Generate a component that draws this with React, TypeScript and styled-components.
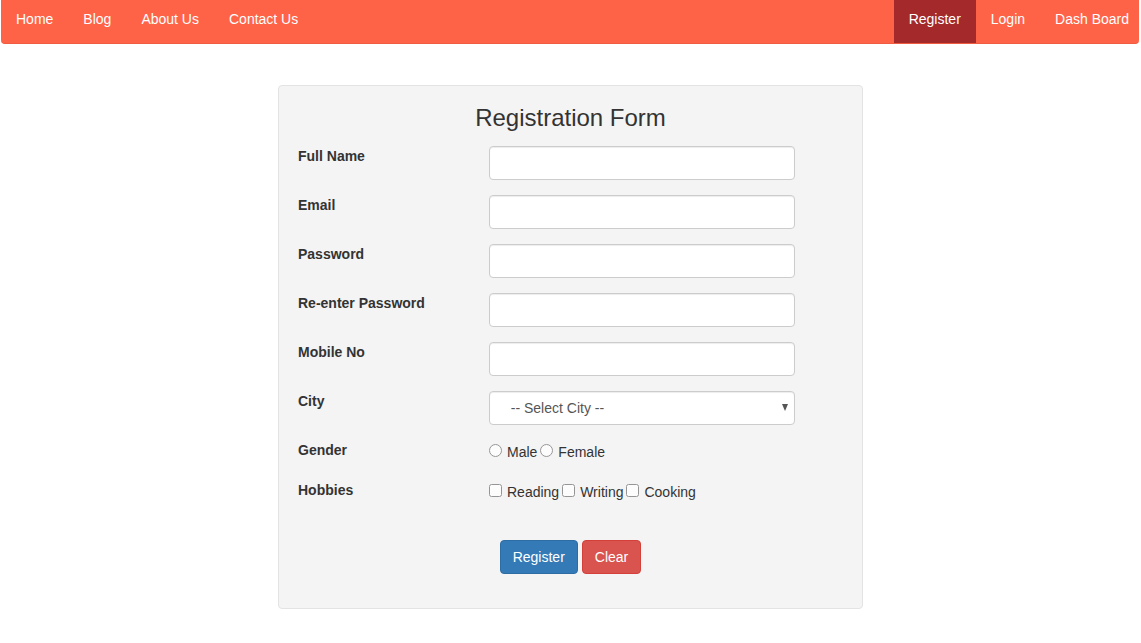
import React from "react";
import styled, { createGlobalStyle } from "styled-components";

const Global = createGlobalStyle`
  html, body { margin: 0; padding: 0; background: #fff; }
  body {
    font-family: "Liberation Sans", Arial, Helvetica, sans-serif;
    font-size: 14px;
    line-height: 20px;
    color: #333;
  }
  * { box-sizing: border-box; }
`;

const NavBar = styled.nav`
  display: flex;
  justify-content: space-between;
  margin: 0 2px 0 1px;
  height: 44px;
  background: #ff6347;
  border-bottom: 1px solid #f05c41;
  border-radius: 0 0 4px 4px;
`;

const NavGroup = styled.div<{ $right?: boolean }>`
  display: flex;
  margin-right: ${(p) => (p.$right ? "-5px" : "0")};
`;

const NavLink = styled.a<{ $active?: boolean }>`
  display: flex;
  align-items: center;
  padding: 0 15px 6px;
  height: 43px;
  color: #fff;
  text-decoration: none;
  background: ${(p) => (p.$active ? "#a3292b" : "transparent")};
`;

const Page = styled.main`
  display: flex;
  justify-content: center;
  padding-top: 41px;
`;

const Well = styled.form`
  width: 585px;
  padding: 18px 19px 19px;
  background: #f4f4f4;
  border: 1px solid #e3e3e3;
  border-radius: 4px;
`;

const Title = styled.h3`
  margin: 0 0 14px;
  font-size: 24px;
  font-weight: 400;
  line-height: 28px;
  text-align: center;
  color: #333;
`;

const Row = styled.div<{ $h: number }>`
  display: grid;
  grid-template-columns: 191px 306px;
  height: ${(p) => p.$h}px;
`;

const Label = styled.label`
  font-weight: 700;
  line-height: 20px;
`;

const Input = styled.input`
  display: block;
  width: 306px;
  height: 34px;
  padding: 6px 12px;
  font: inherit;
  color: #555;
  background: #fff;
  border: 1px solid #ccc;
  border-radius: 4px;
  box-shadow: inset 0 1px 1px rgba(0, 0, 0, 0.075);
`;

const SelectWrap = styled.div`
  position: relative;
  width: 306px;
  height: 34px;
`;

const Select = styled.select`
  width: 306px;
  height: 34px;
  padding: 0 12px 0 13px;
  font: inherit;
  color: #555;
  background: #fff;
  border: 1px solid #ccc;
  border-radius: 4px;
  appearance: none;
  box-shadow: inset 0 1px 1px rgba(0, 0, 0, 0.075);
`;

const Caret = styled.span`
  position: absolute;
  right: 7px;
  top: 13px;
  width: 0;
  height: 0;
  border-left: 3.5px solid transparent;
  border-right: 3.5px solid transparent;
  border-top: 7px solid #555;
  pointer-events: none;
`;

const Choices = styled.div`
  display: flex;
  align-items: center;
  height: 20px;
  margin-top: 2px;
  color: #333;
`;

const Choice = styled.label`
  display: flex;
  align-items: center;
  margin-right: 3px;
`;

const Box = styled.input`
  width: 13px;
  height: 13px;
  margin: -3px 5px 0 0;
  accent-color: #777;
  opacity: 0.75;
`;

const Buttons = styled.div`
  display: flex;
  justify-content: center;
  gap: 4px;
  margin: 20px 0 15px;
`;

const Button = styled.button<{ $variant: "primary" | "danger" }>`
  height: 34px;
  padding: 6px 12px;
  font: inherit;
  color: #fff;
  border-radius: 4px;
  border: 1px solid ${(p) => (p.$variant === "primary" ? "#2e6da4" : "#d43f3a")};
  background: ${(p) => (p.$variant === "primary" ? "#337ab7" : "#d9534f")};
`;

const fields = ["Full Name", "Email", "Password", "Re-enter Password", "Mobile No"];

export default function App() {
  return (
    <>
      <Global />
      <NavBar>
        <NavGroup>
          <NavLink href="#">Home</NavLink>
          <NavLink href="#">Blog</NavLink>
          <NavLink href="#">About Us</NavLink>
          <NavLink href="#">Contact Us</NavLink>
        </NavGroup>
        <NavGroup $right>
          <NavLink href="#" $active>Register</NavLink>
          <NavLink href="#">Login</NavLink>
          <NavLink href="#">Dash Board</NavLink>
        </NavGroup>
      </NavBar>
      <Page>
        <Well onSubmit={(e) => e.preventDefault()}>
          <Title>Registration Form</Title>
          {fields.map((f) => (
            <Row key={f} $h={49}>
              <Label>{f}</Label>
              <Input type={f.includes("Password") ? "password" : "text"} />
            </Row>
          ))}
          <Row $h={49}>
            <Label>City</Label>
            <SelectWrap>
              <Select defaultValue="">
                <option value="">&nbsp;&nbsp;-- Select City --</option>
              </Select>
              <Caret />
            </SelectWrap>
          </Row>
          <Row $h={40}>
            <Label>Gender</Label>
            <Choices>
              <Choice><Box type="radio" name="g" />Male</Choice>
              <Choice><Box type="radio" name="g" />Female</Choice>
            </Choices>
          </Row>
          <Row $h={40}>
            <Label>Hobbies</Label>
            <Choices>
              <Choice><Box type="checkbox" />Reading</Choice>
              <Choice><Box type="checkbox" />Writing</Choice>
              <Choice><Box type="checkbox" />Cooking</Choice>
            </Choices>
          </Row>
          <Buttons>
            <Button type="submit" $variant="primary">Register</Button>
            <Button type="reset" $variant="danger">Clear</Button>
          </Buttons>
        </Well>
      </Page>
    </>
  );
}
